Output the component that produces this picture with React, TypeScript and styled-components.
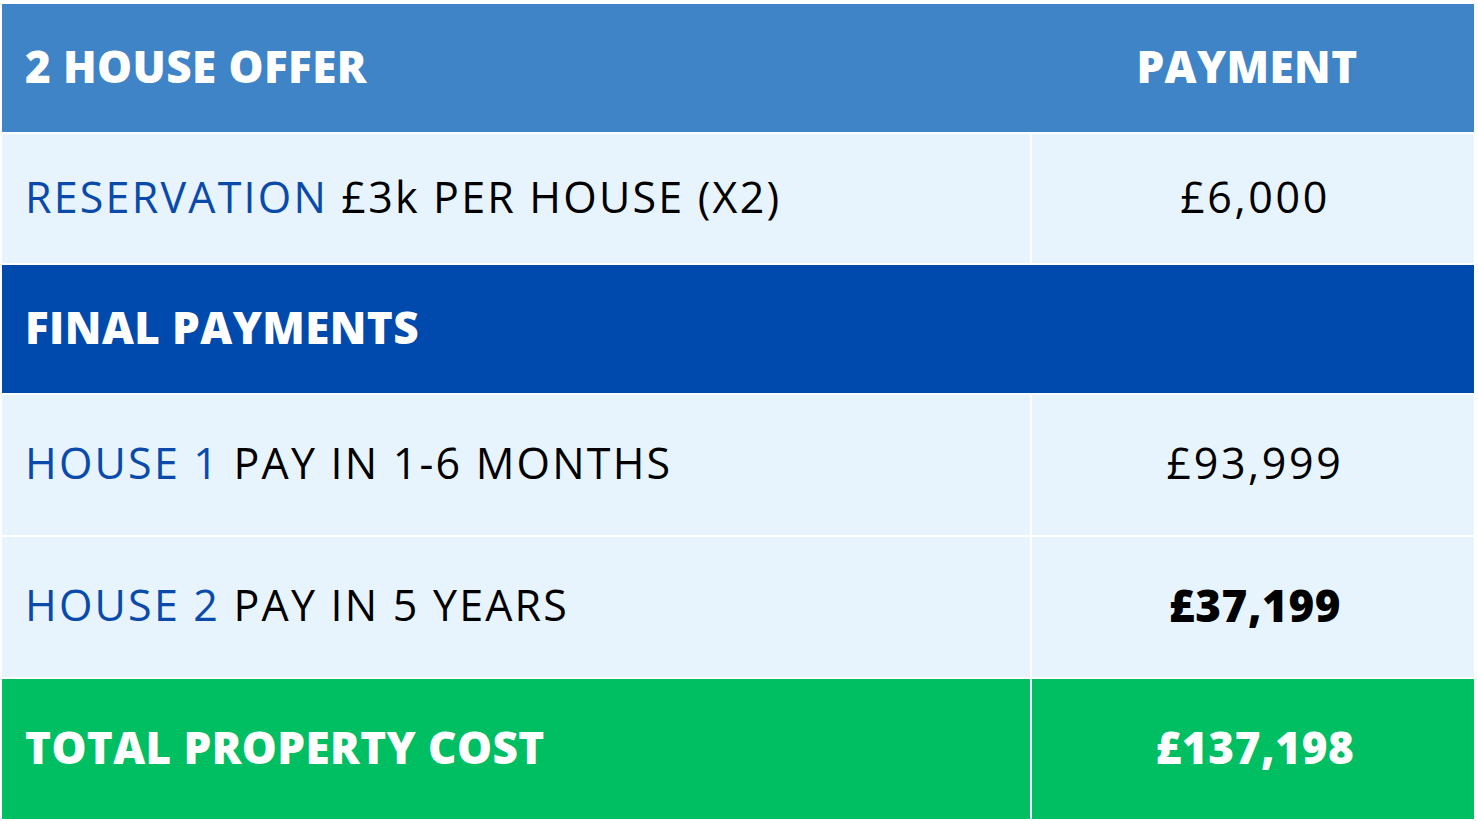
import React from "react";
import styled, { createGlobalStyle } from "styled-components";

const Global = createGlobalStyle`
  html, body { margin: 0; padding: 0; background: #ffffff; }
  body { font-family: "Open Sans", "Liberation Sans", sans-serif; }
`;

const Table = styled.div`
  display: flex;
  flex-direction: column;
  gap: 2px;
  padding: 4px 4px 4px 2px;
  width: 1472px;
  background: #ffffff;
`;

const Row = styled.div<{ $h: number; $bg?: string }>`
  display: grid;
  grid-template-columns: 1028px 442px;
  column-gap: ${(p) => (p.$bg ? "0" : "2px")};
  height: ${(p) => p.$h}px;
  background: ${(p) => p.$bg || "transparent"};
`;

const FullRow = styled.div<{ $h: number; $bg: string }>`
  display: flex;
  align-items: center;
  height: ${(p) => p.$h}px;
  background: ${(p) => p.$bg};
  padding: 0 0 5px 23px;
  box-sizing: border-box;
`;

const Cell = styled.div<{ $bg?: string; $center?: boolean }>`
  display: flex;
  align-items: center;
  justify-content: ${(p) => (p.$center ? "center" : "flex-start")};
  padding: 0 0 5px ${(p) => (p.$center ? "0" : "23px")};
  background: ${(p) => p.$bg || "transparent"};
  white-space: pre;
`;

const HeadText = styled.span<{ $offset?: number }>`
  color: #ffffff;
  font-weight: 800;
  font-size: 44px;
  letter-spacing: 0.4px;
  margin-left: ${(p) => p.$offset || 0}px;
`;

const BodyText = styled.span<{ $blue?: boolean }>`
  color: ${(p) => (p.$blue ? "#0a4aab" : "#000000")};
  font-weight: 400;
  font-size: 43px;
  letter-spacing: 2.2px;
`;

const Value = styled.span<{ $bold?: boolean; $white?: boolean }>`
  color: ${(p) => (p.$white ? "#ffffff" : "#000000")};
  font-weight: ${(p) => (p.$bold ? 800 : 400)};
  font-size: ${(p) => (p.$bold ? 44 : 43)}px;
  letter-spacing: ${(p) => (p.$bold ? 0.6 : 2.6)}px;
  margin-left: 4px;
`;

const LIGHT = "#e8f4fd";

export default function App() {
  return (
    <>
      <Global />
      <Table>
        <Row $h={128} $bg="#3f84c6">
          <Cell>
            <HeadText>2 HOUSE OFFER</HeadText>
          </Cell>
          <Cell $center>
            <HeadText $offset={-8}>PAYMENT</HeadText>
          </Cell>
        </Row>
        <Row $h={129}>
          <Cell $bg={LIGHT}>
            <BodyText $blue>RESERVATION</BodyText>
            <BodyText> £3k PER HOUSE (X2)</BodyText>
          </Cell>
          <Cell $bg={LIGHT} $center>
            <Value>£6,000</Value>
          </Cell>
        </Row>
        <FullRow $h={128} $bg="#004aad">
          <HeadText>FINAL PAYMENTS</HeadText>
        </FullRow>
        <Row $h={140}>
          <Cell $bg={LIGHT}>
            <BodyText $blue>HOUSE 1</BodyText>
            <BodyText>{" PAY IN 1-6 MONTHS"}</BodyText>
          </Cell>
          <Cell $bg={LIGHT} $center>
            <Value>£93,999</Value>
          </Cell>
        </Row>
        <Row $h={140}>
          <Cell $bg={LIGHT}>
            <BodyText $blue>HOUSE 2</BodyText>
            <BodyText> PAY IN 5 YEARS</BodyText>
          </Cell>
          <Cell $bg={LIGHT} $center>
            <Value $bold>£37,199</Value>
          </Cell>
        </Row>
        <Row $h={140}>
          <Cell $bg="#00bf63">
            <HeadText>TOTAL PROPERTY COST</HeadText>
          </Cell>
          <Cell $bg="#00bf63" $center>
            <Value $bold $white>£137,198</Value>
          </Cell>
        </Row>
      </Table>
    </>
  );
}
